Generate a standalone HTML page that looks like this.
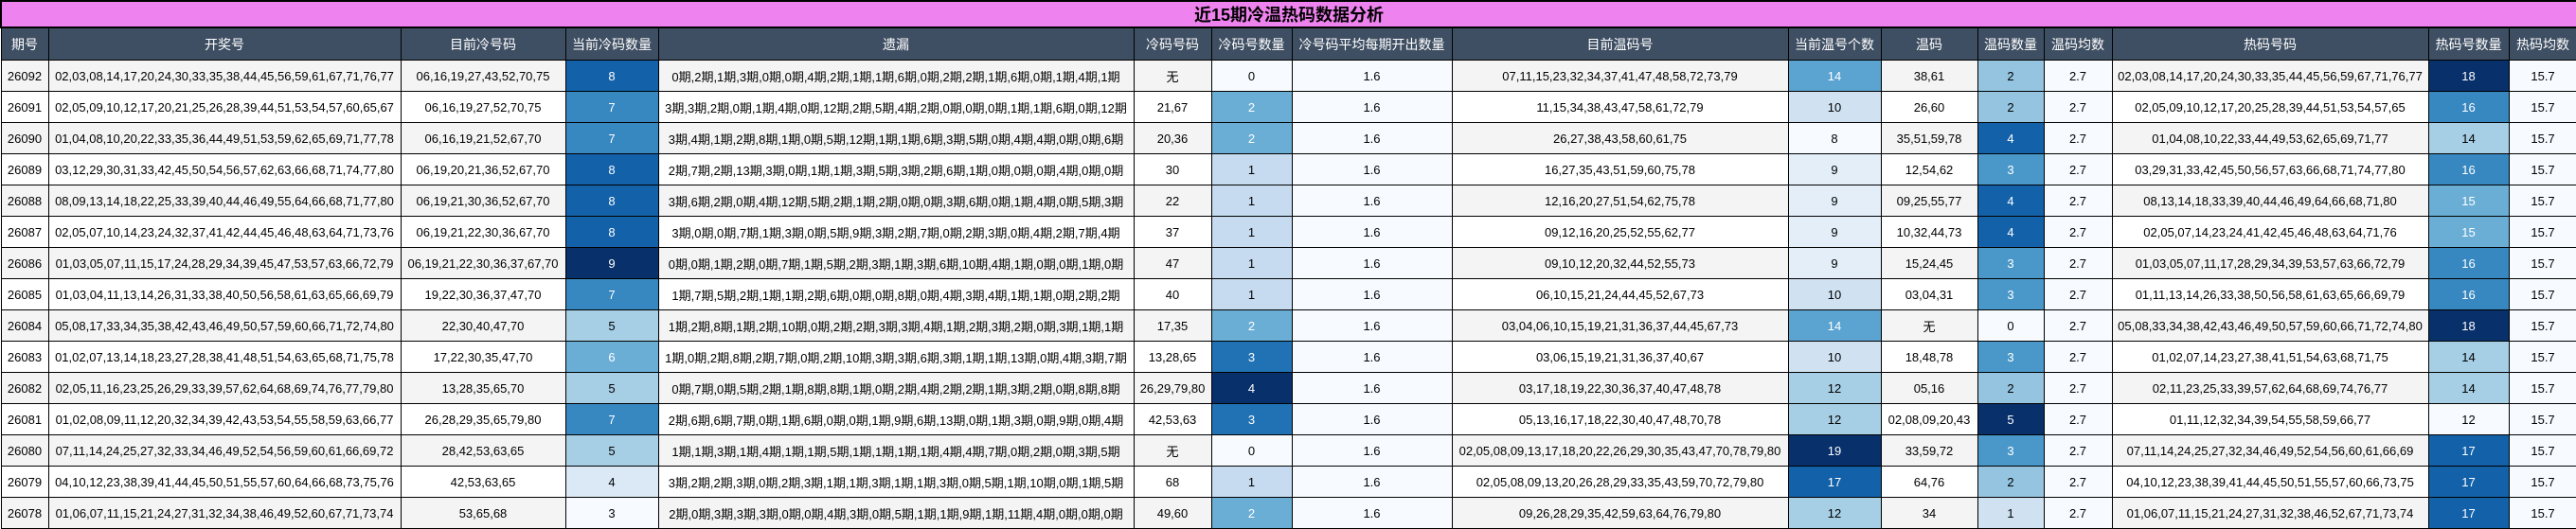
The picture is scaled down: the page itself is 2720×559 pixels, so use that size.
<!DOCTYPE html>
<html><head><meta charset="utf-8">
<style>
html,body{margin:0;padding:0;background:#fff;}
body{width:2720px;height:557px;overflow:hidden;font-family:"Liberation Sans","Noto Sans CJK SC",sans-serif;}
table{border-collapse:collapse;table-layout:fixed;width:2720px;}
td,th{border:1px solid #000;text-align:center;padding:0;white-space:nowrap;overflow:hidden;font-size:13px;color:#000;}
.t td{background:#ee82ee;height:24px;font-size:18px;font-weight:bold;border:2px solid #000;}
.h th{background:#3f4f63;color:#fff;font-weight:normal;font-size:14px;height:33px;}
tbody tr td{height:32px;}
tr.g td{background:#f4f4f4;}
tr.w td{background:#fff;}
td.m{background:#f7fbff!important;}
td.c0{background:#f7fbff!important;}
td.c1{background:#c6dbef!important;}
td.c2{background:#dbe9f6!important;}
td.c3{background:#d0e1f2!important;}
td.c4{background:#a6cee4!important;}
td.c5{background:#94c4df!important;}
td.c6{background:#6aaed6!important;color:#fff;}
td.c7{background:#5ba3d0!important;color:#fff;}
td.c8{background:#4a98c9!important;color:#fff;}
td.c9{background:#3787c0!important;color:#fff;}
td.ca{background:#2171b5!important;color:#fff;}
td.cb{background:#1361a9!important;color:#fff;}
td.cc{background:#08306b!important;color:#fff;}
td.ce{background:#e3eef9!important;}
</style></head><body>
<table>
<colgroup>
<col style="width:50px"><col style="width:372px"><col style="width:174px"><col style="width:98px"><col style="width:502px"><col style="width:82px"><col style="width:85px"><col style="width:169px"><col style="width:355px"><col style="width:98px"><col style="width:102px"><col style="width:70px"><col style="width:72px"><col style="width:334px"><col style="width:85px"><col style="width:72px">
</colgroup>
<thead>
<tr class="t"><td colspan="16">近15期冷温热码数据分析</td></tr>
<tr class="h"><th>期号</th><th>开奖号</th><th>目前冷号码</th><th>当前冷码数量</th><th>遗漏</th><th>冷码号码</th><th>冷码号数量</th><th>冷号码平均每期开出数量</th><th>目前温码号</th><th>当前温号个数</th><th>温码</th><th>温码数量</th><th>温码均数</th><th>热码号码</th><th>热码号数量</th><th>热码均数</th></tr>
</thead>
<tbody>
<tr class="g"><td>26092</td><td>02,03,08,14,17,20,24,30,33,35,38,44,45,56,59,61,67,71,76,77</td><td>06,16,19,27,43,52,70,75</td><td class="cb">8</td><td>0期,2期,1期,3期,0期,0期,4期,2期,1期,1期,6期,0期,2期,2期,1期,6期,0期,1期,4期,1期</td><td>无</td><td class="c0">0</td><td class="m">1.6</td><td>07,11,15,23,32,34,37,41,47,48,58,72,73,79</td><td class="c7">14</td><td>38,61</td><td class="c5">2</td><td class="m">2.7</td><td>02,03,08,14,17,20,24,30,33,35,44,45,56,59,67,71,76,77</td><td class="cc">18</td><td class="m">15.7</td></tr>
<tr class="w"><td>26091</td><td>02,05,09,10,12,17,20,21,25,26,28,39,44,51,53,54,57,60,65,67</td><td>06,16,19,27,52,70,75</td><td class="c9">7</td><td>3期,3期,2期,0期,1期,4期,0期,12期,2期,5期,4期,2期,0期,0期,0期,1期,1期,6期,0期,12期</td><td>21,67</td><td class="c6">2</td><td class="m">1.6</td><td>11,15,34,38,43,47,58,61,72,79</td><td class="c3">10</td><td>26,60</td><td class="c5">2</td><td class="m">2.7</td><td>02,05,09,10,12,17,20,25,28,39,44,51,53,54,57,65</td><td class="c9">16</td><td class="m">15.7</td></tr>
<tr class="g"><td>26090</td><td>01,04,08,10,20,22,33,35,36,44,49,51,53,59,62,65,69,71,77,78</td><td>06,16,19,21,52,67,70</td><td class="c9">7</td><td>3期,4期,1期,2期,8期,1期,0期,5期,12期,1期,1期,6期,3期,5期,0期,4期,4期,0期,0期,6期</td><td>20,36</td><td class="c6">2</td><td class="m">1.6</td><td>26,27,38,43,58,60,61,75</td><td class="c0">8</td><td>35,51,59,78</td><td class="cb">4</td><td class="m">2.7</td><td>01,04,08,10,22,33,44,49,53,62,65,69,71,77</td><td class="c4">14</td><td class="m">15.7</td></tr>
<tr class="w"><td>26089</td><td>03,12,29,30,31,33,42,45,50,54,56,57,62,63,66,68,71,74,77,80</td><td>06,19,20,21,36,52,67,70</td><td class="cb">8</td><td>2期,7期,2期,13期,3期,0期,1期,1期,3期,5期,3期,2期,6期,1期,0期,0期,0期,4期,0期,0期</td><td>30</td><td class="c1">1</td><td class="m">1.6</td><td>16,27,35,43,51,59,60,75,78</td><td class="ce">9</td><td>12,54,62</td><td class="c8">3</td><td class="m">2.7</td><td>03,29,31,33,42,45,50,56,57,63,66,68,71,74,77,80</td><td class="c9">16</td><td class="m">15.7</td></tr>
<tr class="g"><td>26088</td><td>08,09,13,14,18,22,25,33,39,40,44,46,49,55,64,66,68,71,77,80</td><td>06,19,21,30,36,52,67,70</td><td class="cb">8</td><td>3期,6期,2期,0期,4期,12期,5期,2期,1期,2期,0期,0期,3期,6期,0期,1期,4期,0期,5期,3期</td><td>22</td><td class="c1">1</td><td class="m">1.6</td><td>12,16,20,27,51,54,62,75,78</td><td class="ce">9</td><td>09,25,55,77</td><td class="cb">4</td><td class="m">2.7</td><td>08,13,14,18,33,39,40,44,46,49,64,66,68,71,80</td><td class="c6">15</td><td class="m">15.7</td></tr>
<tr class="w"><td>26087</td><td>02,05,07,10,14,23,24,32,37,41,42,44,45,46,48,63,64,71,73,76</td><td>06,19,21,22,30,36,67,70</td><td class="cb">8</td><td>3期,0期,0期,7期,1期,3期,0期,5期,9期,3期,2期,7期,0期,2期,3期,0期,4期,2期,7期,4期</td><td>37</td><td class="c1">1</td><td class="m">1.6</td><td>09,12,16,20,25,52,55,62,77</td><td class="ce">9</td><td>10,32,44,73</td><td class="cb">4</td><td class="m">2.7</td><td>02,05,07,14,23,24,41,42,45,46,48,63,64,71,76</td><td class="c6">15</td><td class="m">15.7</td></tr>
<tr class="g"><td>26086</td><td>01,03,05,07,11,15,17,24,28,29,34,39,45,47,53,57,63,66,72,79</td><td>06,19,21,22,30,36,37,67,70</td><td class="cc">9</td><td>0期,0期,1期,2期,0期,7期,1期,5期,2期,3期,1期,3期,6期,10期,4期,1期,0期,0期,1期,0期</td><td>47</td><td class="c1">1</td><td class="m">1.6</td><td>09,10,12,20,32,44,52,55,73</td><td class="ce">9</td><td>15,24,45</td><td class="c8">3</td><td class="m">2.7</td><td>01,03,05,07,11,17,28,29,34,39,53,57,63,66,72,79</td><td class="c9">16</td><td class="m">15.7</td></tr>
<tr class="w"><td>26085</td><td>01,03,04,11,13,14,26,31,33,38,40,50,56,58,61,63,65,66,69,79</td><td>19,22,30,36,37,47,70</td><td class="c9">7</td><td>1期,7期,5期,2期,1期,1期,2期,6期,0期,0期,8期,0期,4期,3期,4期,1期,1期,0期,2期,2期</td><td>40</td><td class="c1">1</td><td class="m">1.6</td><td>06,10,15,21,24,44,45,52,67,73</td><td class="c3">10</td><td>03,04,31</td><td class="c8">3</td><td class="m">2.7</td><td>01,11,13,14,26,33,38,50,56,58,61,63,65,66,69,79</td><td class="c9">16</td><td class="m">15.7</td></tr>
<tr class="g"><td>26084</td><td>05,08,17,33,34,35,38,42,43,46,49,50,57,59,60,66,71,72,74,80</td><td>22,30,40,47,70</td><td class="c4">5</td><td>1期,2期,8期,1期,2期,10期,0期,2期,2期,3期,3期,4期,1期,2期,3期,2期,0期,3期,1期,1期</td><td>17,35</td><td class="c6">2</td><td class="m">1.6</td><td>03,04,06,10,15,19,21,31,36,37,44,45,67,73</td><td class="c7">14</td><td>无</td><td class="c0">0</td><td class="m">2.7</td><td>05,08,33,34,38,42,43,46,49,50,57,59,60,66,71,72,74,80</td><td class="cc">18</td><td class="m">15.7</td></tr>
<tr class="w"><td>26083</td><td>01,02,07,13,14,18,23,27,28,38,41,48,51,54,63,65,68,71,75,78</td><td>17,22,30,35,47,70</td><td class="c6">6</td><td>1期,0期,2期,8期,2期,7期,0期,2期,10期,3期,3期,6期,3期,1期,1期,13期,0期,4期,3期,7期</td><td>13,28,65</td><td class="ca">3</td><td class="m">1.6</td><td>03,06,15,19,21,31,36,37,40,67</td><td class="c3">10</td><td>18,48,78</td><td class="c8">3</td><td class="m">2.7</td><td>01,02,07,14,23,27,38,41,51,54,63,68,71,75</td><td class="c4">14</td><td class="m">15.7</td></tr>
<tr class="g"><td>26082</td><td>02,05,11,16,23,25,26,29,33,39,57,62,64,68,69,74,76,77,79,80</td><td>13,28,35,65,70</td><td class="c4">5</td><td>0期,7期,0期,5期,2期,1期,8期,8期,1期,0期,2期,4期,2期,2期,1期,3期,2期,0期,8期,8期</td><td>26,29,79,80</td><td class="cc">4</td><td class="m">1.6</td><td>03,17,18,19,22,30,36,37,40,47,48,78</td><td class="c4">12</td><td>05,16</td><td class="c5">2</td><td class="m">2.7</td><td>02,11,23,25,33,39,57,62,64,68,69,74,76,77</td><td class="c4">14</td><td class="m">15.7</td></tr>
<tr class="w"><td>26081</td><td>01,02,08,09,11,12,20,32,34,39,42,43,53,54,55,58,59,63,66,77</td><td>26,28,29,35,65,79,80</td><td class="c9">7</td><td>2期,6期,6期,7期,0期,1期,6期,0期,0期,1期,9期,6期,13期,0期,1期,3期,0期,9期,0期,4期</td><td>42,53,63</td><td class="ca">3</td><td class="m">1.6</td><td>05,13,16,17,18,22,30,40,47,48,70,78</td><td class="c4">12</td><td>02,08,09,20,43</td><td class="cc">5</td><td class="m">2.7</td><td>01,11,12,32,34,39,54,55,58,59,66,77</td><td class="c0">12</td><td class="m">15.7</td></tr>
<tr class="g"><td>26080</td><td>07,11,14,24,25,27,32,33,34,46,49,52,54,56,59,60,61,66,69,72</td><td>28,42,53,63,65</td><td class="c4">5</td><td>1期,1期,3期,1期,4期,1期,1期,5期,1期,1期,1期,1期,4期,4期,7期,0期,2期,0期,3期,5期</td><td>无</td><td class="c0">0</td><td class="m">1.6</td><td>02,05,08,09,13,17,18,20,22,26,29,30,35,43,47,70,78,79,80</td><td class="cc">19</td><td>33,59,72</td><td class="c8">3</td><td class="m">2.7</td><td>07,11,14,24,25,27,32,34,46,49,52,54,56,60,61,66,69</td><td class="cb">17</td><td class="m">15.7</td></tr>
<tr class="w"><td>26079</td><td>04,10,12,23,38,39,41,44,45,50,51,55,57,60,64,66,68,73,75,76</td><td>42,53,63,65</td><td class="c2">4</td><td>3期,2期,2期,3期,0期,2期,3期,1期,1期,3期,1期,1期,3期,0期,5期,1期,10期,0期,1期,5期</td><td>68</td><td class="c1">1</td><td class="m">1.6</td><td>02,05,08,09,13,20,26,28,29,33,35,43,59,70,72,79,80</td><td class="cb">17</td><td>64,76</td><td class="c5">2</td><td class="m">2.7</td><td>04,10,12,23,38,39,41,44,45,50,51,55,57,60,66,73,75</td><td class="cb">17</td><td class="m">15.7</td></tr>
<tr class="g"><td>26078</td><td>01,06,07,11,15,21,24,27,31,32,34,38,46,49,52,60,67,71,73,74</td><td>53,65,68</td><td class="c0">3</td><td>2期,0期,3期,3期,3期,0期,0期,4期,3期,0期,5期,1期,1期,9期,1期,11期,4期,0期,0期,0期</td><td>49,60</td><td class="c6">2</td><td class="m">1.6</td><td>09,26,28,29,35,42,59,63,64,76,79,80</td><td class="c4">12</td><td>34</td><td class="c3">1</td><td class="m">2.7</td><td>01,06,07,11,15,21,24,27,31,32,38,46,52,67,71,73,74</td><td class="cb">17</td><td class="m">15.7</td></tr>
</tbody>
</table>
</body></html>
